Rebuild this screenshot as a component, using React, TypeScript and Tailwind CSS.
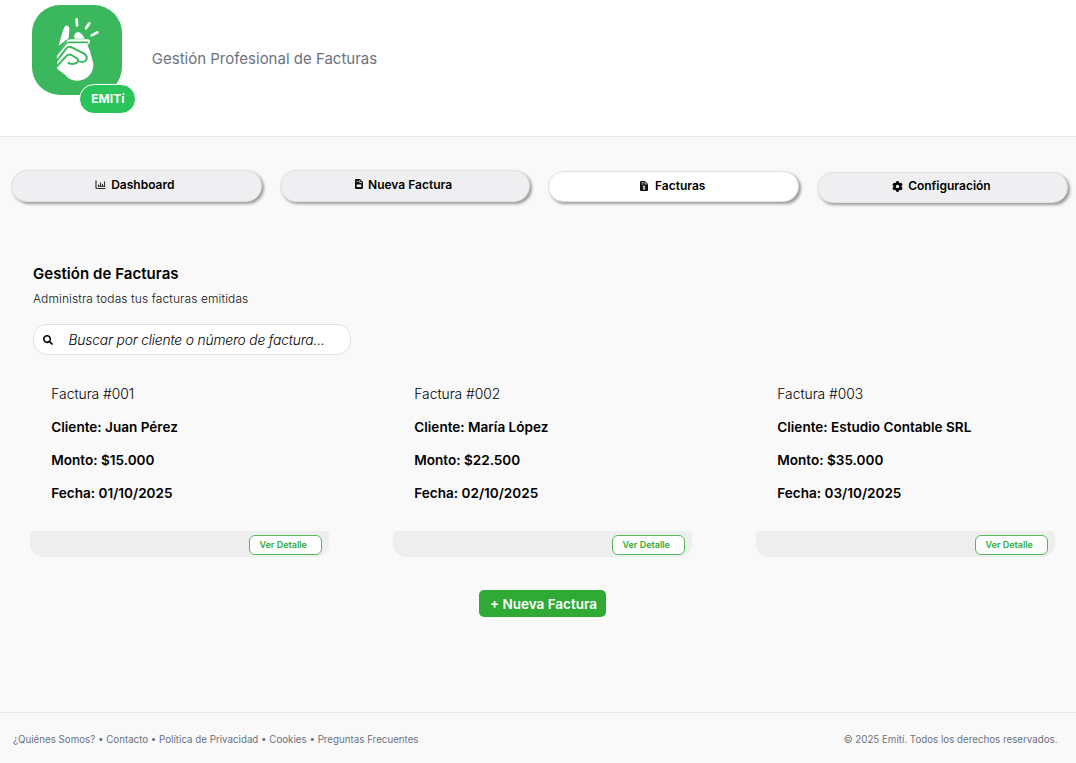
import React from 'react';
import { FaCog, FaSearch } from 'react-icons/fa';

function Hand() {
  return (
    <svg viewBox="39 15 270 270" className="block h-[90px] w-[90px]" fill="none">
      <path d="M119 138 C125 116 129 97 136 82 C141 73 151 76 151 87 L149 112 C149 117 145 119 140 121 Z" fill="#fff" />
      <path d="M166 112 C164 99 174 94 183 98 C190 102 194 109 197 116 L168 116 Z" fill="#fff" />
      <path d="M113 163 L143 123 Q147 118 155 118 H207 Q214 118 213 126 Q212 132 205 134 L212 151 Q215 155 216 166 L223 190 C226 216 206 241 178 242 C158 243 148 235 139 225 L115 207 Q111 203 115 195 Z" fill="#fff" />
      <path d="M111 167 L142 129 Q146 126 153 127 H206" stroke="#3bb75e" strokeWidth="5" strokeLinecap="round" strokeLinejoin="round" />
      <path d="M111 186 L142 145 Q149 138 158 142 L194 160 Q207 168 202 179 Q196 189 183 185" stroke="#3bb75e" strokeWidth="6" strokeLinecap="round" strokeLinejoin="round" />
      <path d="M113 200 L143 167 Q149 161 157 165 L174 175 Q181 181 174 188 Q163 195 148 189" stroke="#3bb75e" strokeWidth="6" strokeLinecap="round" strokeLinejoin="round" />
      <path d="M173 58 L174 76 M211 70 L201 85 M235 97 L218 106" stroke="#fff" strokeWidth="8" strokeLinecap="round" />
    </svg>
  );
}

function NewFileIcon() {
  return (
    <svg viewBox="0 0 16 20" className="mb-0.5 h-[10px] w-2" fill="none">
      <path d="M2 0 H10 L16 6 V18 Q16 20 14 20 H2 Q0 20 0 18 V2 Q0 0 2 0Z" fill="#111" />
      <path d="M9.5 2 V7 H14 M3.5 5 H7" stroke="#efeff1" strokeWidth="1.6" />
      <path d="M3.5 11 H12.5 V16 H3.5Z" fill="#efeff1" />
    </svg>
  );
}

function InvoiceIcon() {
  return (
    <svg viewBox="0 0 16 20" className="h-[10px] w-2" fill="none">
      <path d="M2 0 H10 L16 6 V18 Q16 20 14 20 H2 Q0 20 0 18 V2 Q0 0 2 0Z" fill="#111" />
      <path d="M10 1 V6 H15 M3 3 H7 M3 6 H7" stroke="#fff" strokeWidth="1.3" />
      <path d="M10.5 11 Q6 9 6 11.5 Q6 13 8 13.3 Q11 14 10 16 Q8 17 5.5 15.5 M8 9 V18" stroke="#fff" strokeWidth="1.4" />
    </svg>
  );
}

function ChartIcon() {
  return (
    <svg viewBox="0 0 22 20" className="h-[10px] w-[11px]" fill="none" stroke="#333">
      <path d="M2 1 V15 Q2 17 4 17 H21" strokeWidth="2.4" />
      <path d="M7 14 V9 M11 14 V5 M15 14 V8 M19 14 V3" strokeWidth="2.2" />
      <path d="M6 12.5 H20" strokeWidth="2" />
    </svg>
  );
}

const tabs = [
  { label: 'Dashboard', icon: <ChartIcon />, box: 'mt-0 h-[31.5px] bg-[#efeff1]', content: 'gap-[5px] pb-[2px] pr-[3px]' },
  { label: 'Nueva Factura', icon: <NewFileIcon />, box: 'mt-0 h-[31.5px] bg-[#efeff1]', content: 'gap-[5px] pb-px pr-[3px]' },
  { label: 'Facturas', icon: <InvoiceIcon />, box: 'mt-px h-[31px] bg-white', content: 'gap-[7px] pb-px pr-[2px]' },
  { label: 'Configuración', icon: <FaCog className="h-[11px] w-[11px]" />, box: 'mt-[1.5px] h-[31px] bg-[#efeff1]', content: 'gap-[5px] pb-[1.5px] pr-0.5' },
];

const invoices = [
  { id: '001', client: 'Juan Pérez', amount: '$15.000', date: '01/10/2025' },
  { id: '002', client: 'María López', amount: '$22.500', date: '02/10/2025' },
  { id: '003', client: 'Estudio Contable SRL', amount: '$35.000', date: '03/10/2025' },
];

export default function App() {
  return (
    <div className="flex h-[763px] w-[1076px] flex-col overflow-hidden bg-[#f9f9f9] font-['Inter',sans-serif] text-black">
      <header className="flex h-[137px] shrink-0 items-start border-b border-[#e9e9eb] bg-white pl-[32.4px] pt-[5.4px]">
        <div className="relative h-[90px] w-[90px] rounded-[28px] bg-[#3bb75e]">
          <Hand />
          <span className="absolute left-[47px] top-[78.6px] flex h-[30px] w-[57px] items-center justify-center rounded-full border border-white bg-[#2ac45a] text-[12px] font-bold text-white">EMITí</span>
        </div>
        <p className="ml-[29.4px] mt-[41.6px] text-[15px] leading-6 text-[#6b7280]">Gestión Profesional de Facturas</p>
      </header>

      <nav className="mt-[33px] flex h-[60px] shrink-0 items-start gap-[18px] pl-[11px]">
        {tabs.map((t) => (
          <button key={t.label} className={`flex w-[250.7px] shrink-0 items-center justify-center rounded-full border border-[#e1e1e3] text-[12px] font-semibold shadow-[2px_2px_3px_rgba(0,0,0,0.38)] ${t.box} ${t.content}`}>
            {t.icon}
            <span>{t.label}</span>
          </button>
        ))}
      </nav>

      <main className="flex flex-1 flex-col">
        <div className="flex flex-col items-start pl-[33px] pt-[33px]">
          <h1 className="text-[15px] font-semibold leading-[22px] tracking-[0.05px]">Gestión de Facturas</h1>
          <p className="mt-[3px] pt-px text-[12px] font-light leading-5 tracking-[0.1px] text-[#111]">Administra todas tus facturas emitidas</p>
          <div className="mt-[15px] flex h-[31px] w-[318px] items-center rounded-[14px] border border-[#e1e1e3] bg-white pl-[9px]">
            <FaSearch className="h-2.5 w-2.5" />
            <span className="ml-[15.5px] pt-px text-[13.8px] font-light italic tracking-[-0.16px]">Buscar por cliente o número de factura...</span>
          </div>
        </div>

        <section className="mt-[22px] flex gap-16 pl-[30px]">
          {invoices.map((v) => (
            <article key={v.id} className="w-[299px] shrink-0">
              <div className="flex h-[154px] flex-col pl-[21.3px] pt-px text-[13.55px] font-semibold leading-[33px]">
                <p className="text-[13.8px] font-light">Factura #{v.id}</p>
                <p>Cliente: {v.client}</p>
                <p>Monto: {v.amount}</p>
                <p>Fecha: {v.date}</p>
              </div>
              <div className="flex h-[26px] items-center justify-end rounded-b-[13px] rounded-t-sm bg-[#eeeeee] pr-[7.5px] pt-px">
                <button className="flex h-5 w-[72.5px] items-center rounded-md border border-[#55b95a] bg-white pl-[9.5px] text-[9px] font-semibold text-[#2fab38]">Ver Detalle</button>
              </div>
            </article>
          ))}
        </section>

        <button className="ml-[479px] mt-[33px] flex h-[27px] w-[127px] items-center justify-center rounded-[5px] bg-[#2eaa35] pl-[2px] pt-px text-[13.5px] font-semibold text-white">+ Nueva Factura</button>
      </main>

      <footer className="flex h-[51px] shrink-0 items-center justify-between border-t border-[#e9e9eb] pl-[13px] pr-[18.5px] pt-[5px] text-[9.75px] text-[#6b7280]">
        <span>¿Quiénes Somos? • Contacto • Política de Privacidad • Cookies • Preguntas Frecuentes</span>
        <span>© 2025 Emití. Todos los derechos reservados.</span>
      </footer>
    </div>
  );
}
